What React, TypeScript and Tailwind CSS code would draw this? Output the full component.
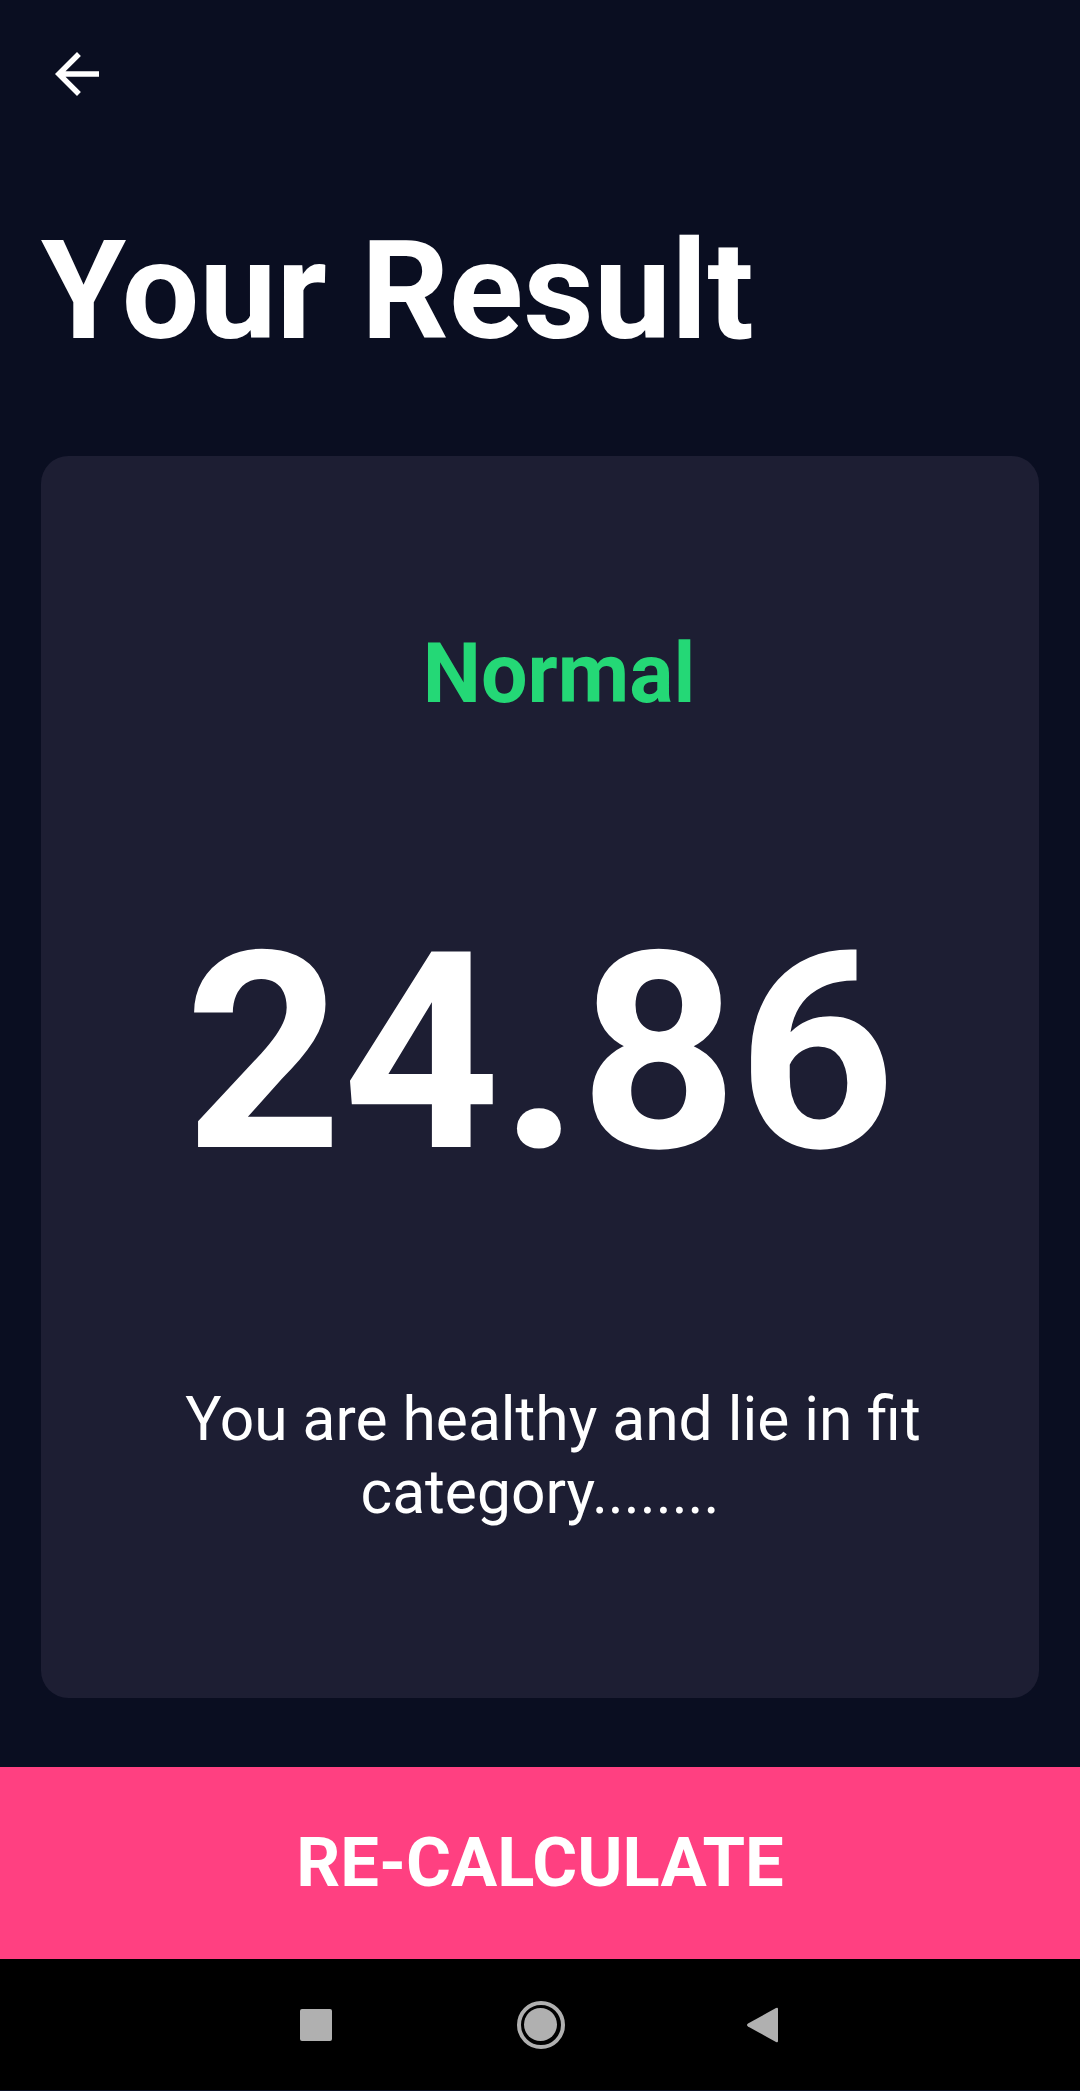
import React from 'react';

const BackArrow = () => (
  <svg width="66" height="66" viewBox="0 0 24 24" fill="white">
    <path d="M20 11H7.83l5.59-5.59L12 4l-8 8 8 8 1.41-1.41L7.83 13H20v-2z" />
  </svg>
);

const NavBar = () => (
  <div className="h-[131px] bg-black flex items-center justify-center">
    <div className="w-[32px] h-[32px] rounded-[2px] bg-[#b0b0b0] ml-[-2px]" />
    <div className="ml-[185px] w-[48px] h-[48px] rounded-full border-[4px] border-[#b0b0b0] flex items-center justify-center">
      <div className="w-[33px] h-[33px] rounded-full bg-[#b0b0b0]" />
    </div>
    <svg className="ml-[180px]" width="34" height="38" viewBox="0 0 34 38">
      <path
        d="M31 2 L3 17.5 Q1 19 3 20.5 L31 36 Q33 37 33 35 L33 3 Q33 1 31 2 Z"
        fill="#b0b0b0"
      />
    </svg>
  </div>
);

export default function App() {
  return (
    <div
      className="w-[1080px] h-[2091px] bg-[#0A0E21] flex flex-col text-white overflow-hidden"
      style={{ fontFamily: 'Roboto, "Noto Sans", sans-serif' }}
    >
      {/* app bar */}
      <div className="pt-[41px] pl-[44px] h-[107px]">
        <BackArrow />
      </div>

      <h1 className="mt-[104px] pl-[41px] text-[137.5px] font-bold leading-[161px]">
        Your Result
      </h1>

      {/* result card */}
      <div className="mt-[84px] mx-[41px] h-[1242px] rounded-[27.5px] bg-[#1D1E33] flex flex-col items-center justify-evenly">
        <p className="pl-[38px] text-[82.5px] font-bold leading-[97px] text-[#24D876]">Normal</p>
        <p className="text-[275px] font-bold leading-[322px]">24.86</p>
        <p className="text-center text-[60.5px] leading-[73px]">
          <span className="block pl-[26px]">You are healthy and lie in fit</span>
          <span className="block">category........</span>
        </p>
      </div>

      <div className="mt-[69px] h-[192px] bg-[#FF4081] flex items-center justify-center">
        <span className="text-[68.75px] font-bold leading-none">RE-CALCULATE</span>
      </div>

      <NavBar />
    </div>
  );
}
